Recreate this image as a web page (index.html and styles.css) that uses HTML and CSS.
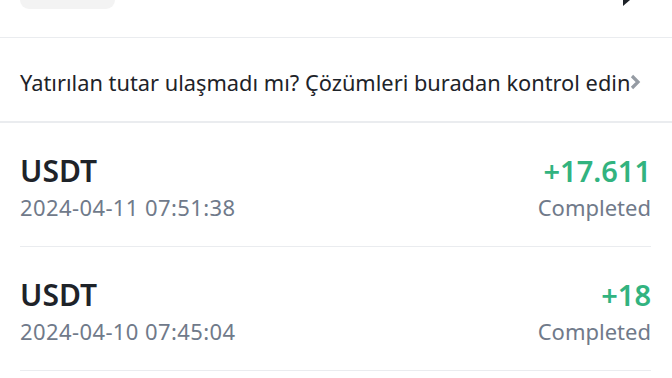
FILE: index.html
```html
<!DOCTYPE html>
<html lang="tr">
<head>
<meta charset="utf-8">
<link rel="stylesheet" href="styles.css">
</head>
<body>
<div class="page">
  <header class="top">
    <div class="pill"></div>
    <svg class="top-icon" width="12" height="8" viewBox="0 0 12 8"><path d="M3 0 L10 0 L3 6 Z" fill="#1e2329"/></svg>
  </header>
  <a class="banner">
    <span class="banner-text">Yatırılan tutar ulaşmadı mı? Çözümleri buradan kontrol edin</span>
    <svg class="chev" width="11" height="16" viewBox="0 0 11 16"><path d="M2 2 L8 8 L2 14" fill="none" stroke="#959ba3" stroke-width="3.2"/></svg>
  </a>
  <div class="list">
    <div class="item">
      <div class="col">
        <div class="coin">USDT</div>
        <div class="date">2024-04-11 07:51:38</div>
      </div>
      <div class="col right">
        <div class="amount">+17.611</div>
        <div class="status">Completed</div>
      </div>
    </div>
    <div class="item">
      <div class="col">
        <div class="coin">USDT</div>
        <div class="date">2024-04-10 07:45:04</div>
      </div>
      <div class="col right">
        <div class="amount">+18</div>
        <div class="status">Completed</div>
      </div>
    </div>
  </div>
</div>
</body>
</html>
```
FILE: styles.css
```css
* { box-sizing: border-box; }
html, body { margin: 0; padding: 0; background: #fff; }
body { font-family: "Noto Sans", "Open Sans", sans-serif; color: #1e2329; width: 672px; height: 378px; overflow: hidden; }
.top { height: 38px; border-bottom: 1px solid #eaecef; display: flex; justify-content: space-between; align-items: flex-start; padding: 0 40px 0 20px; }
.pill { width: 95px; height: 9px; background: #f3f3f3; border-radius: 0 0 9px 9px; }
.top-icon { display: block; }
.banner { height: 85px; display: flex; align-items: center; padding: 5px 20px 0; border-bottom: 2px solid #eaecef; }
.banner-text { font-size: 21.8px; color: #1e2329; white-space: nowrap; }
.chev { display: block; }
.list { padding: 0 21px 0 20px; }
.item { height: 124px; padding-top: 4px; border-bottom: 1px solid #eaecef; display: flex; justify-content: space-between; align-items: center; }
.col { display: flex; flex-direction: column; gap: 6px; }
.right { align-items: flex-end; }
.coin { font-size: 30px; font-weight: 600; line-height: 34px; }
.amount { font-size: 29px; font-weight: 600; line-height: 34px; color: #32b37f; }
.date, .status { font-size: 22px; line-height: 26px; color: #707a8a; }
.date { letter-spacing: 0.4px; }
```
